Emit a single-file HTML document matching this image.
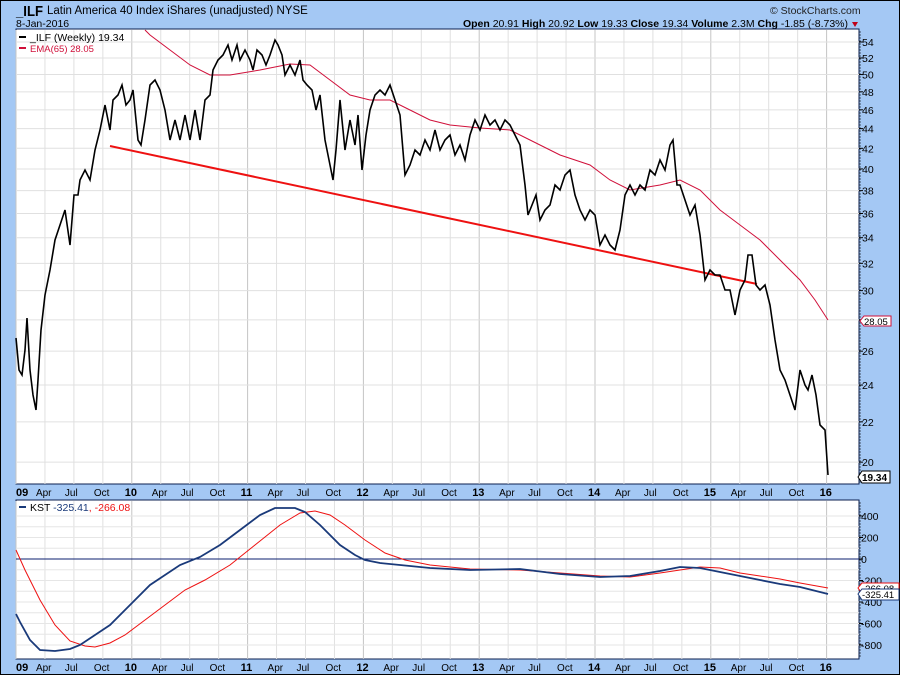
<!DOCTYPE html>
<html><head><meta charset="utf-8"><style>
html,body{margin:0;padding:0;background:#a4c8f4;}
svg{display:block;font-family:"Liberation Sans",Arial,sans-serif;}
</style></head><body>
<svg id="s" width="900" height="675" viewBox="0 0 900 675" xmlns="http://www.w3.org/2000/svg">
<rect x="0" y="0" width="900" height="675" fill="#a4c8f4"/>
<rect x="0.5" y="0.5" width="899" height="674" fill="none" stroke="#000"/>
<text x="16" y="16" font-size="15" font-weight="bold" fill="#000" textLength="27" lengthAdjust="spacingAndGlyphs">_ILF</text>
<text x="47" y="14" font-size="11.5" fill="#000">Latin America 40 Index iShares (unadjusted)  NYSE</text>
<text x="16" y="27" font-size="10.5" fill="#000">8-Jan-2016</text>
<text x="770" y="14" font-size="10.5" fill="#222">© StockCharts.com</text>
<text x="848" y="27" font-size="10.5" text-anchor="end" fill="#000"><tspan font-weight="bold">Open</tspan> 20.91 <tspan font-weight="bold">High</tspan> 20.92 <tspan font-weight="bold">Low</tspan> 19.33 <tspan font-weight="bold">Close</tspan> 19.34 <tspan font-weight="bold">Volume</tspan> 2.3M <tspan font-weight="bold">Chg</tspan> -1.85 (-8.73%)</text>
<path d="M852 22 l6 0 l-3 5z" fill="#c00018"/>
<rect x="16" y="29" width="843" height="455" fill="#fff" stroke="#0b1f4f"/>
<rect x="16" y="500" width="843" height="159" fill="#fff" stroke="#0b1f4f"/>
<g id="grid" stroke="#d8d8d8" stroke-width="1"></g>
<g id="axes" font-size="10" fill="#000"></g>
<line x1="110" y1="146" x2="757" y2="284" stroke="#ee1111" stroke-width="2"/>
<polyline fill="none" stroke="#d0103a" stroke-width="1" points="145,30 150,35 170,50 190,65 210,75 230,75 260,70 290,64 310,65 330,80 350,95 370,100 390,100 410,110 430,120 450,125 480,128 510,130 530,140 560,155 590,165 610,180 630,190 660,185 680,180 700,190 720,210 740,225 760,240 780,260 800,280 815,300 828,320"/>
<polyline fill="none" stroke="#000" stroke-width="1.6" points="16,338 19,370 22,375 25,350 27,318 30,370 33,395 36,410 38,380 41,330 45,295 50,270 55,240 60,225 65,210 70,245 74,195 78,195 80,180 85,170 90,180 95,150 100,130 105,105 110,130 113,100 118,95 122,85 126,105 130,100 133,90 138,140 141,145 145,120 150,85 155,80 160,90 165,110 170,140 175,120 180,140 185,115 190,140 195,110 200,140 205,100 210,95 213,70 218,60 223,55 228,45 232,60 237,45 240,60 245,50 250,60 253,70 257,50 262,55 266,65 270,55 275,40 278,45 282,55 285,75 290,65 295,75 300,60 303,80 307,85 312,90 316,110 320,95 325,140 330,165 333,180 336,150 340,100 345,150 350,120 355,145 358,115 362,170 366,135 370,110 375,95 380,90 385,95 390,85 395,100 400,115 405,175 410,165 415,150 420,155 425,140 430,150 435,130 440,150 445,140 450,135 455,155 460,145 465,160 470,135 475,120 480,130 485,115 490,125 495,120 500,130 505,120 510,125 515,135 520,145 525,185 528,215 532,205 536,195 540,220 545,210 550,205 555,185 560,190 565,175 570,170 575,195 580,210 585,220 590,210 595,215 600,245 605,235 610,245 615,250 620,230 625,195 630,185 635,195 640,185 645,190 650,170 655,175 660,160 665,170 670,145 673,140 677,185 680,185 685,200 690,215 695,205 700,235 705,280 710,270 715,275 720,275 725,290 730,290 735,315 740,290 745,280 748,255 752,255 756,285 760,290 765,285 770,305 775,340 780,370 785,380 790,395 795,410 800,370 805,385 808,390 812,375 816,395 820,425 825,430 828,475"/>
<line x1="19" y1="37" x2="26" y2="37" stroke="#000" stroke-width="2"/>
<text x="30" y="41" font-size="10.5" fill="#000">_ILF (Weekly) 19.34</text>
<line x1="19" y1="48" x2="26" y2="48" stroke="#d0103a" stroke-width="2"/>
<text x="30" y="52" font-size="9.5" fill="#d0103a">EMA(65) 28.05</text>
<line x1="16" y1="559" x2="859" y2="559" stroke="#0b1f6f" stroke-width="1"/>
<polyline fill="none" stroke="#ee1111" stroke-width="1" points="16,550 25,570 40,600 55,625 70,641 85,646 95,647 110,643 125,635 145,620 165,605 185,590 205,580 230,565 255,545 280,525 300,513 315,511 330,515 345,525 365,540 385,553 405,560 430,565 470,569 520,570 560,573 600,576 630,577 660,573 680,570 700,567 720,568 740,573 760,576 780,579 800,583 828,588"/>
<polyline fill="none" stroke="#1a3a7a" stroke-width="1.8" points="16,614 20,622 30,640 40,650 55,651 70,649 80,645 95,635 110,625 130,605 150,585 165,575 180,565 200,557 220,545 240,530 260,515 275,508 295,508 305,512 320,525 340,545 355,555 365,560 380,563 400,565 430,568 470,570 520,569 560,574 600,577 630,576 660,571 680,567 700,568 720,572 740,576 760,580 780,584 800,587 828,594"/>
<line x1="19" y1="507" x2="26" y2="507" stroke="#1a3a7a" stroke-width="2"/>
<text x="30" y="511" font-size="10.5"><tspan fill="#000">KST</tspan> <tspan fill="#1a3a7a">-325.41</tspan><tspan fill="#ee1111">, -266.08</tspan></text>
<path d="M860 321 l4 -5 h27 v10 h-27z" fill="#fff" stroke="#d0103a"/>
<text x="864" y="325" font-size="9.5">28.05</text>
<path d="M858 477 l4 -6 h28 v12 h-28z" fill="#fff" stroke="#000"/>
<text x="862" y="481" font-size="10" font-weight="bold">19.34</text>
<path d="M858 588 l4 -5 h37 v10 h-37z" fill="#fff" stroke="#ee1111"/>
<text x="862" y="592" font-size="9.5">-266.08</text>
<path d="M858 594 l4 -5 h37 v11 h-37z" fill="#fff" stroke="#1a3a7a"/>
<text x="862" y="598" font-size="9.5">-325.41</text>
</svg>
<script>
var NS="http://www.w3.org/2000/svg",g=document.getElementById('grid'),ax=document.getElementById('axes');
function el(p,t,a,txt){var e=document.createElementNS(NS,t);for(var k in a)e.setAttribute(k,a[k]);if(txt)e.textContent=txt;p.appendChild(e);return e;}
var yr=['09','10','11','12','13','14','15','16'],q=['Apr','Jul','Oct'];
for(var i=0;i<8;i++){for(var j=0;j<4;j++){if(i==7&&j>0)break;var x=16+i*115.8+j*28.95;
 var col=j==0?'#c4c4c4':'#e0e0e0';
 el(g,'line',{x1:x,y1:30,x2:x,y2:484,stroke:col});el(g,'line',{x1:x,y1:501,x2:x,y2:659,stroke:col});
 var lab=j==0?yr[i]:q[j-1],w=j==0?'bold':'normal',fs=j==0?11:10;
 [496,671].forEach(function(yy){el(ax,'text',{x:j==0?x+(i==0?0:-7):x-9,y:yy,'font-weight':w,'font-size':fs},lab);});
}}
for(var p=20;p<=54;p+=2){var y=42+423*(Math.log(54)-Math.log(p));
 el(g,'line',{x1:17,y1:y,x2:859,y2:y,stroke:'#e0e0e0'});
 el(ax,'line',{x1:859,y1:y,x2:863,y2:y,stroke:'#000'});
 el(ax,'text',{x:862,y:y+4,'font-size':10.5},String(p));}
for(var v=-800;v<=400;v+=100){var y=559-v*0.1075;
 if(v!=0)el(g,'line',{x1:17,y1:y,x2:859,y2:y,stroke:'#e6e6e6'});
 if(v%200==0){el(ax,'line',{x1:859,y1:y,x2:863,y2:y,stroke:'#000'});
 el(ax,'text',{x:861,y:y+4,'font-size':10.5},String(v));}}
for(var y=32;y<484;y+=3)el(ax,'line',{x1:859,y1:y,x2:861,y2:y,stroke:'#000','stroke-width':0.6});
for(var y=503;y<659;y+=3)el(ax,'line',{x1:859,y1:y,x2:861,y2:y,stroke:'#000','stroke-width':0.6});
</script>
</body></html>
